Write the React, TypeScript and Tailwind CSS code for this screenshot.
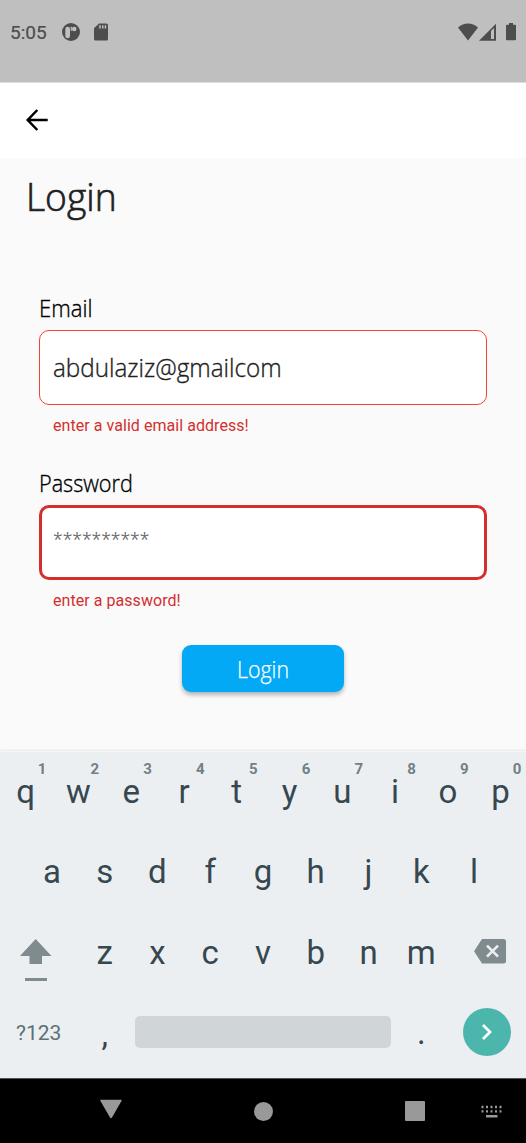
import type { ReactNode } from "react";

const topRow = ["q", "w", "e", "r", "t", "y", "u", "i", "o", "p"];
const homeRow = ["a", "s", "d", "f", "g", "h", "j", "k", "l"];
const bottomRow = ["z", "x", "c", "v", "b", "n", "m"];

function StatusBar() {
  return (
    <header className="flex h-[82px] shrink-0 items-start bg-[#bfbfbf] pt-[22px] text-[#4d4d4d]">
      <span className="ml-[10px] w-[52px] text-[19px] leading-[22px] [-webkit-text-stroke:0.2px_#4d4d4d]">5:05</span>
      <svg className="mt-[1px] h-[18px] w-[18px]" viewBox="0 0 18 18">
        <circle cx="9" cy="9" r="9" fill="currentColor" />
        <rect x="3.3" y="3.8" width="4.7" height="11.4" rx="2.2" fill="#bfbfbf" />
        <path d="M8.7 3.7h1.2v4.1H8.7z" fill="#bfbfbf" />
        <circle cx="12.2" cy="6" r="2.3" fill="#bfbfbf" />
      </svg>
      <svg className="mt-[1px] ml-[14px] h-[18px] w-[14px]" viewBox="0 0 14 18">
        <path d="M5 .5h7.5Q14 .5 14 2v14q0 1.500-1.500 1.500h-11Q0 17.500 0 16V5.300z" fill="currentColor" />
        <path d="M5.200 2.200h1.600v3.400H5.200zM8 2.200h1.500v3.400H8zM10.700 2.200h1.500v3.400h-1.500z" fill="#bfbfbf" />
      </svg>
      <svg className="mt-[1px] ml-auto h-[18px] w-[20px]" viewBox="0 0 20 18">
        <path d="M0 4.500Q4.500.5 10 .5t10 4L10 17.500z" fill="currentColor" />
      </svg>
      <svg className="mt-[1px] ml-[1px] h-[18px] w-[17px]" viewBox="0 0 17 18">
        <path d="M0 17.700L17 .7v17z" fill="currentColor" />
        <path d="M12 8l3-3v11h-3z" fill="#bfbfbf" />
      </svg>
      <svg className="mt-[1px] mr-[10px] ml-[10px] h-[18px] w-[10px]" viewBox="0 0 10 18">
        <path d="M3 0h4v1.800h2q1 0 1 1v13.500q0 1-1 1H1q-1 0-1-1V2.800q0-1 1-1h2z" fill="currentColor" />
      </svg>
    </header>
  );
}

function Key({ children, hint }: { children: ReactNode; hint?: string }) {
  return (
    <button type="button" className="relative flex h-full w-[52.78px] shrink-0 items-center justify-center text-[33px] leading-none">
      {children}
      {hint && <span className="absolute top-[9px] left-[38.500px] text-[15px] leading-[16px] font-bold text-[#737f84]">{hint}</span>}
    </button>
  );
}

function Keyboard() {
  return (
    <section className="flex h-[327px] shrink-0 flex-col border-t border-[#f5f6f7] bg-[#ebeff2] text-[#37474f] shadow-[0_-1px_2px_rgba(0,0,0,0.08)]">
      <div className="-ml-[0.700px] flex h-[78px]">
        {topRow.map((letter, i) => (
          <Key key={letter} hint={String((i + 1) % 10)}>{letter}</Key>
        ))}
      </div>
      <div className="mt-[1.500px] ml-[25.500px] flex h-[80.500px]">
        {homeRow.map((letter) => <Key key={letter}>{letter}</Key>)}
      </div>
      <div className="flex h-[80.500px] items-center">
        <button type="button" aria-label="Shift" className="flex w-[78.300px] shrink-0 pt-[17px] pl-[20px]">
          <svg className="h-[43px] w-[32px]" viewBox="0 0 32 43" fill="#808b8f">
            <path d="M15.700 0L31.500 17H22v8H9.500v-8H0zM5 39h22v3H5z" />
          </svg>
        </button>
        {bottomRow.map((letter) => <Key key={letter}>{letter}</Key>)}
        <button type="button" aria-label="Backspace" className="ml-[26px] pb-[2px]">
          <svg className="h-[25px] w-[32px]" viewBox="0 0 32 25">
            <path d="M8 0h21.500Q32 0 32 2.500v19.500q0 2.500-2.500 2.500H8L0 12.300z" fill="#808b8f" />
            <path d="M13 6.700l11 11m0-11l-11 11" stroke="#ebeff2" strokeWidth="2.600" />
          </svg>
        </button>
      </div>
      <div className="flex h-[79px] items-center">
        <button type="button" className="w-[78.300px] shrink-0 pt-[3px] pl-[16px] text-left text-[21px] leading-none text-[#607078]">?123</button>
        <div className="flex h-full pt-[5px]"><Key>,</Key></div>
        <button type="button" aria-label="Space" className="ml-[4px] h-[32px] w-[256px] shrink-0 rounded-[5px] bg-[#d0d5d8]" />
        <div className="ml-[4px] flex h-full pt-[1px]"><Key>.</Key></div>
        <button type="button" aria-label="Next" className="ml-[15px] flex h-[48px] w-[48px] shrink-0 items-center justify-center rounded-full bg-[#4db6ac]">
          <svg className="h-[18px] w-[12px]" viewBox="0 0 12 18" fill="none" stroke="#fff" strokeWidth="2.700">
            <path d="M2 2l7 7-7 7" />
          </svg>
        </button>
      </div>
    </section>
  );
}

function NavigationBar() {
  return (
    <nav className="flex h-[65px] shrink-0 items-center border-t border-[#555] bg-black text-[#999]">
      <svg className="mt-[-4px] ml-[100px] h-[20px] w-[22px]" viewBox="0 0 22 20" fill="currentColor">
        <path d="M1 .7h20q1 0 .6 1L12 18.500q-1 1.500-2 0L.3 1.700Q0 .7 1 .7z" />
      </svg>
      <span className="ml-[132px] h-[19px] w-[19px] rounded-full bg-[#999]" />
      <span className="ml-[132px] h-[20px] w-[20px] rounded-[1px] bg-[#999]" />
      <svg className="ml-[55.500px] h-[13px] w-[22px]" viewBox="0 0 22 13" fill="currentColor">
        {[0, 4.500, 9, 13.500, 18].map((x) => (
          <path key={x} d={`M${x + 0.5} .7h2v2.600h-2zM${x + 0.5} 5.300h2v2.300h-2z`} />
        ))}
        <path d="M5 10h11.500v2.500H5z" />
      </svg>
    </nav>
  );
}

export default function App() {
  return (
    <div className="flex h-[1143px] w-[526px] flex-col overflow-hidden bg-[#fafafa] font-['Roboto',sans-serif]">
      <StatusBar />
      <div className="flex h-[76px] shrink-0 items-center border-t border-[#dedede] bg-white pb-[1px]">
        <button type="button" aria-label="Back" className="ml-[26px]">
          <svg className="h-[22px] w-[22px]" viewBox="0 0 22 22" fill="none" stroke="#000" strokeWidth="2.500">
            <path d="M11.300 1L1.700 11l9.600 10M1.700 11h20" />
          </svg>
        </button>
      </div>
      <main className="flex h-[593px] shrink-0 flex-col font-['Open_Sans',sans-serif] font-light">
        <h1 className="mt-[10px] ml-[25.500px] h-[57px] origin-left scale-x-[0.955] text-[39px] leading-[55px] text-[#212121] [-webkit-text-stroke:0.7px_#212121]">Login</h1>
        <form className="mt-[67px] px-[39px]">
          <label className="block h-[38px] origin-left scale-x-[0.96] text-[23px] leading-[33px] text-black [-webkit-text-stroke:0.35px_#000]" htmlFor="email">Email</label>
          <div className="h-[75px] w-[448px] overflow-hidden rounded-[10px] border-[1.500px] border-[#f44336] bg-white pl-[12.500px]">
            <input id="email" readOnly value="abdulaziz@gmailcom" className="block h-[71px] w-full origin-left scale-x-[0.97] bg-transparent text-[25px] text-[#212121] outline-none [-webkit-text-stroke:0.35px_#212121]" />
          </div>
          <p className="h-[60px] pt-[10px] pl-[14px] font-['Roboto',sans-serif] text-[16px] leading-[22px] font-normal tracking-[0.050px] text-[#d32f2f]">enter a valid email address!</p>
          <label className="block h-[40px] origin-left scale-x-[0.94] text-[23px] leading-[36px] text-black [-webkit-text-stroke:0.35px_#000]" htmlFor="password">Password</label>
          <div className="h-[75px] w-[448px] overflow-hidden rounded-[10px] border-[3px] border-[#d32f2f] bg-white pl-[11px]">
            <input id="password" readOnly placeholder="**********" className="block h-[62px] w-full bg-transparent text-[17.500px] text-[#212121] outline-none [-webkit-text-stroke:0.2px_#555] placeholder:text-[#555]" />
          </div>
          <p className="h-[65px] pt-[10px] pl-[14px] font-['Roboto',sans-serif] text-[16px] leading-[22px] font-normal tracking-[0.050px] text-[#d32f2f]">enter a password!</p>
          <button type="button" className="mx-auto flex h-[47px] w-[162px] items-center justify-center rounded-[9px] bg-[#03a9f4] text-[23px] text-white shadow-[0_3px_4px_rgba(0,0,0,0.28)]">
            <span className="scale-x-[0.93] pt-px [-webkit-text-stroke:0.25px_#fff]">Login</span>
          </button>
        </form>
      </main>
      <Keyboard />
      <NavigationBar />
    </div>
  );
}
